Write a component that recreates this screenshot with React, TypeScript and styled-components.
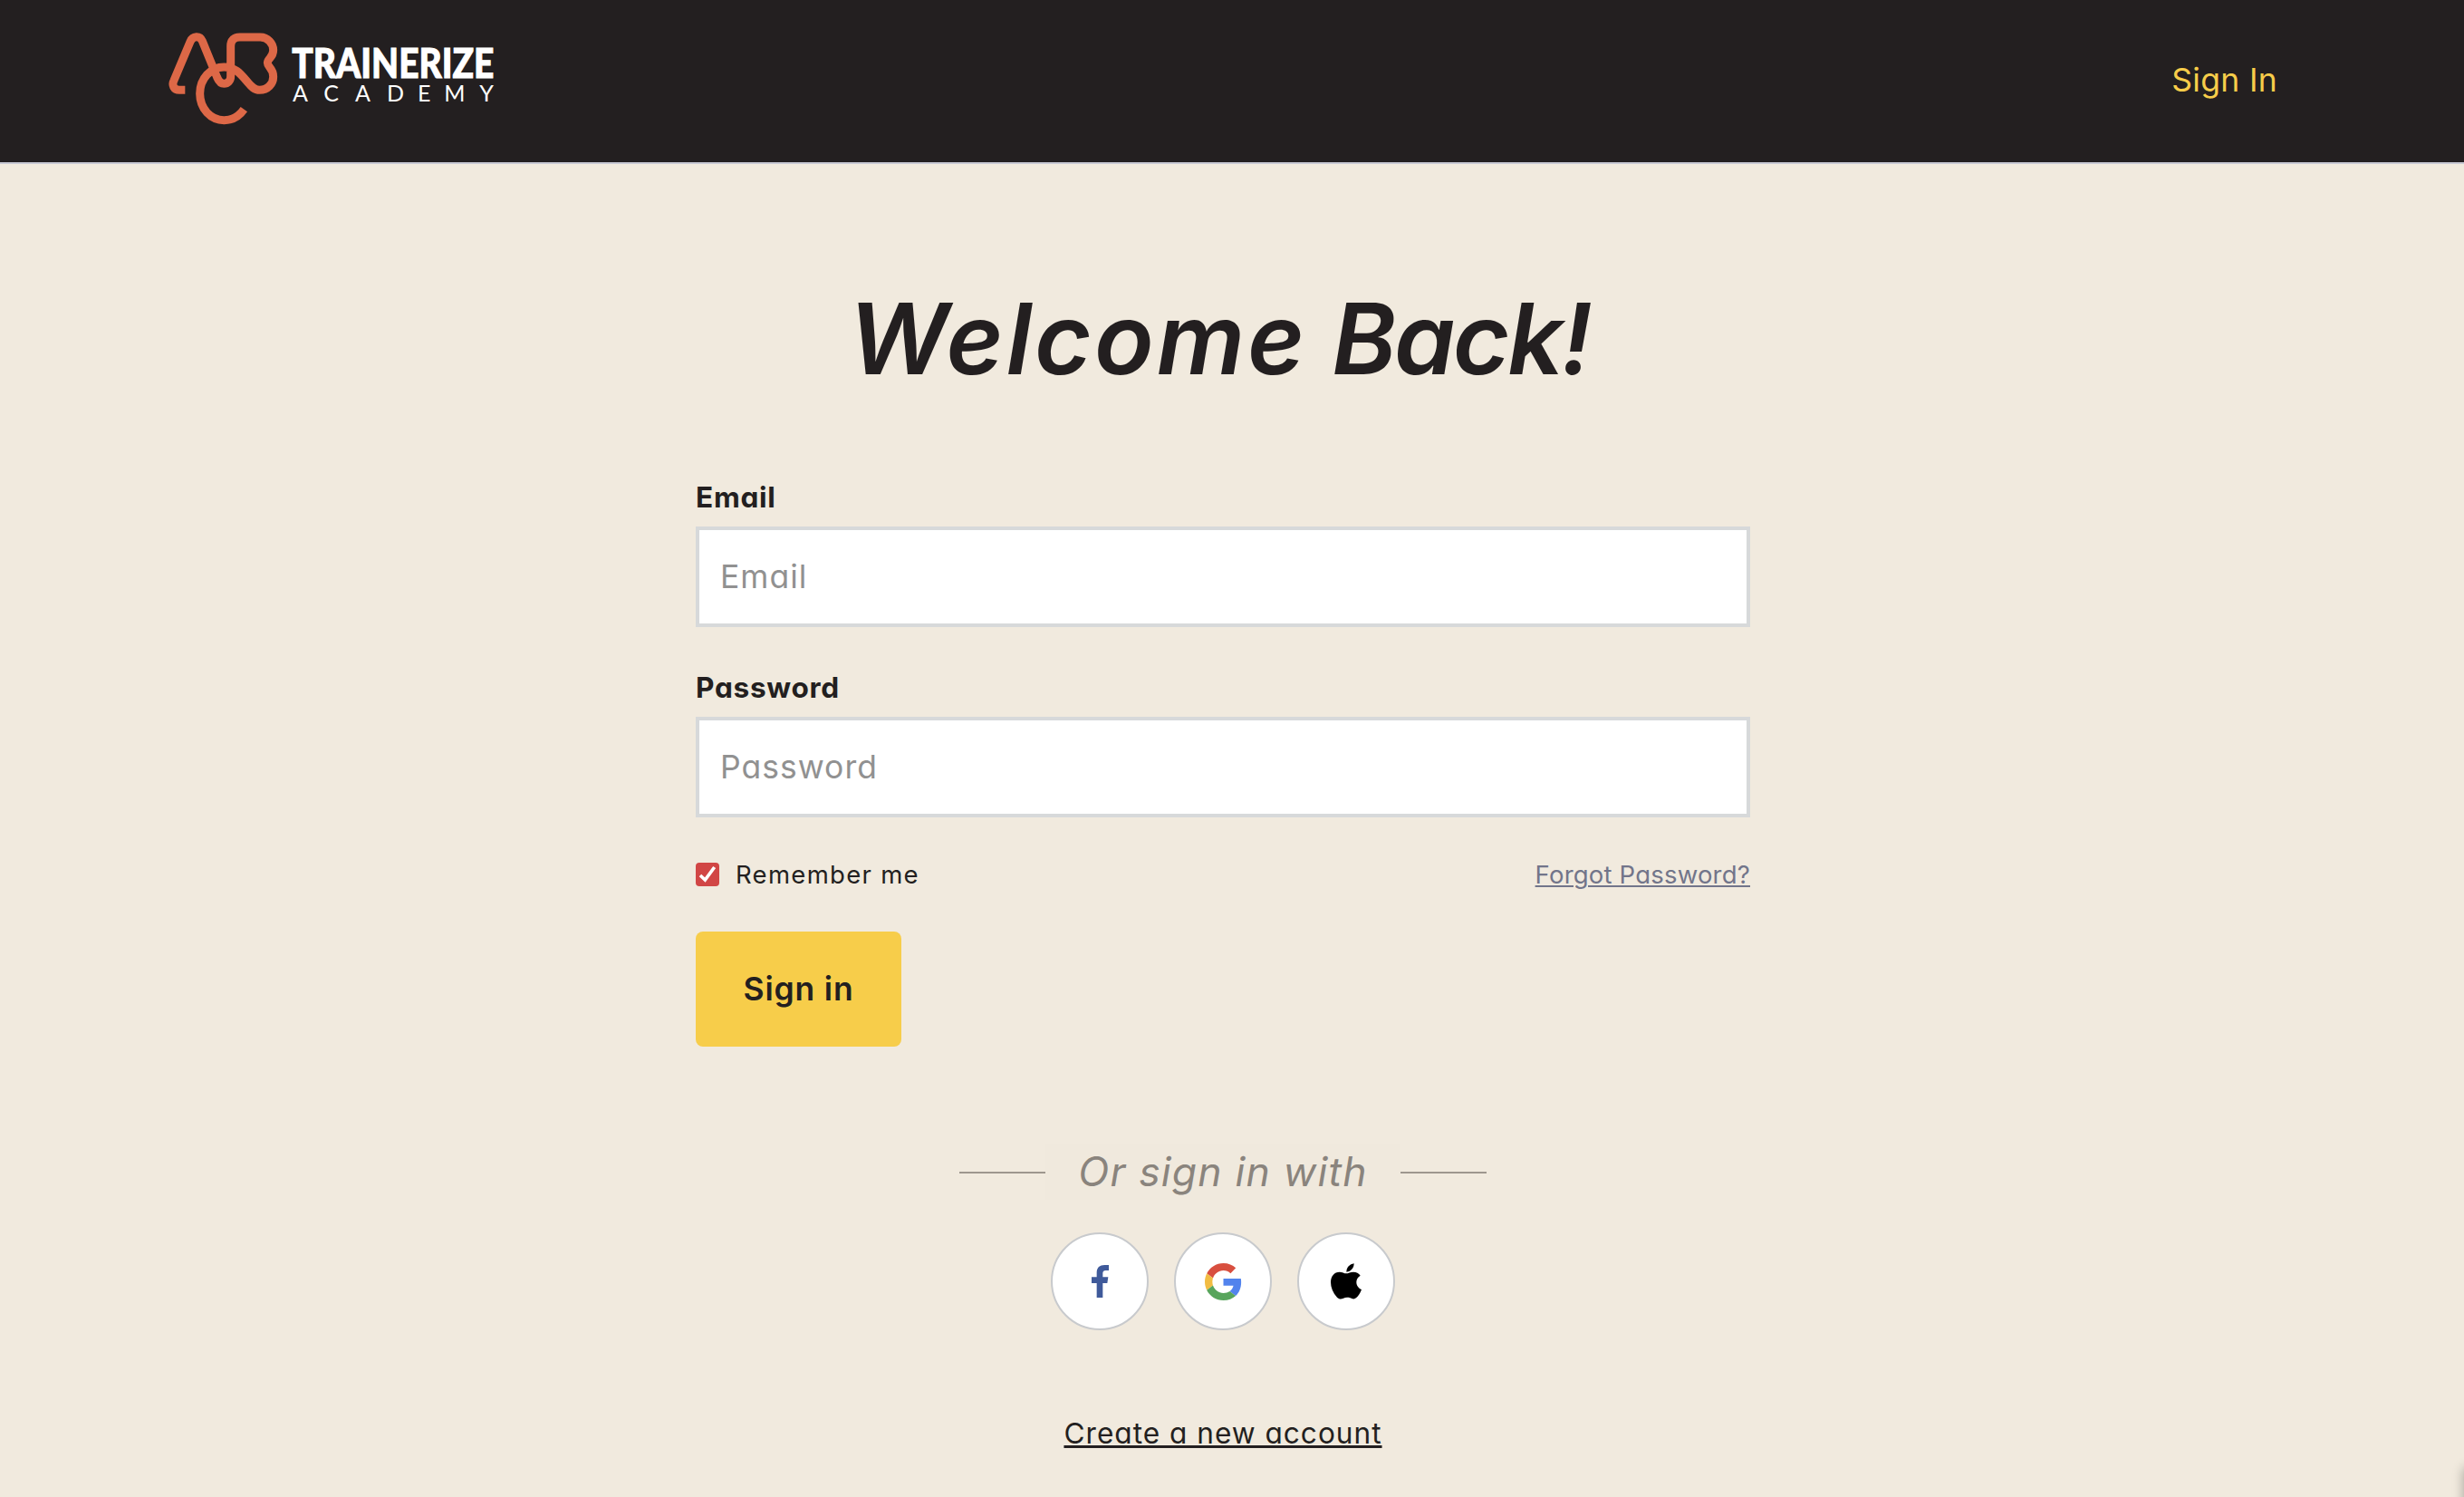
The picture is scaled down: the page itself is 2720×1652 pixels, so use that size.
import { FC } from 'react';
import styled, { createGlobalStyle } from 'styled-components';

const GlobalStyle = createGlobalStyle`
  * {
    box-sizing: border-box;
  }

  body {
    margin: 0;
    background: #f1eade;
    color: #231f20;
    font-family: Inter, "Open Sans", sans-serif;
    font-feature-settings: "cv11";
  }

  input {
    font-feature-settings: inherit;
  }
`;

const Page = styled.div`
  position: relative;
  height: 1652px;
  overflow: hidden;
`;

const Header = styled.header`
  display: flex;
  align-items: flex-start;
  justify-content: space-between;
  height: 181px;
  padding: 35px 206px 0 186px;
  background: #231f20;
  border-bottom: 2px solid #c8c9d4;
`;

const HeaderLink = styled.a`
  margin-top: 29px;
  color: #f7cd4a;
  font-size: 35.5px;
  line-height: 50px;
  letter-spacing: 0.3px;
`;

const Main = styled.main`
  display: flex;
  flex-direction: column;
  align-items: center;
  width: 2700px;
  padding-top: 138px;
`;

const Title = styled.h1`
  margin: 0 0 96px;
  padding-right: 8px;
  font-size: 108px;
  font-style: italic;
  font-weight: 600;
  line-height: 110px;
  white-space: nowrap;
`;

const TitleWord = styled.span<{ $spacing: number }>`
  letter-spacing: ${(p) => p.$spacing}px;
`;

const Form = styled.form`
  display: flex;
  flex-direction: column;
  align-items: flex-start;
  width: 1164px;
`;

const Field = styled.label`
  display: flex;
  flex-direction: column;
  gap: 8px;
  width: 100%;
  margin-bottom: 43px;
`;

const FieldName = styled.span`
  font-size: 31.6px;
  font-weight: 700;
  line-height: 48px;
  letter-spacing: 0.7px;
`;

const Input = styled.input`
  width: 100%;
  height: 111px;
  padding: 0 23px;
  border: 4px solid #d7d9da;
  border-radius: 0;
  outline: none;
  background: #fff;
  font-family: inherit;
  font-size: 35.5px;
  letter-spacing: 1px;

  &::placeholder {
    color: #919191;
    opacity: 1;
  }
`;

const Options = styled.div`
  display: flex;
  align-items: center;
  justify-content: space-between;
  width: 100%;
  height: 40px;
  font-size: 27.5px;
  line-height: 40px;
`;

const Remember = styled.label`
  display: flex;
  align-items: center;
  gap: 18px;
  letter-spacing: 1.3px;
`;

const CheckBox = styled.span`
  display: flex;
  width: 26px;
  height: 26px;
  border-radius: 4px;
  background: #d14645;
`;

const ForgotLink = styled.a`
  color: #72758a;
  letter-spacing: 0.2px;
  text-decoration: underline;
  text-decoration-thickness: 2px;
  text-underline-offset: 2px;
`;

const SubmitButton = styled.button`
  width: 227px;
  height: 127px;
  margin-top: 43px;
  padding: 0;
  border: 0;
  border-radius: 8px;
  background: #f7cd4a;
  color: #231f20;
  font-family: inherit;
  font-feature-settings: inherit;
  font-size: 35.5px;
  font-weight: 600;
  letter-spacing: 0.8px;
`;

const Separator = styled.div`
  display: flex;
  align-items: center;
  width: 582px;
  margin-top: 108px;

  &::before,
  &::after {
    content: '';
    flex: 1;
    height: 2px;
    background: #9e978e;
  }
`;

const SeparatorText = styled.span`
  width: 392px;
  background: #f0e9dd;
  color: #8a847d;
  font-size: 44.5px;
  font-style: italic;
  line-height: 61px;
  letter-spacing: 1.2px;
  text-align: center;
  white-space: nowrap;
`;

const Socials = styled.div`
  display: flex;
  gap: 28px;
  margin-top: 36px;
`;

const SocialButton = styled.a`
  display: flex;
  align-items: center;
  justify-content: center;
  width: 108px;
  height: 108px;
  border: 2px solid #c8cacd;
  border-radius: 50%;
  background: #fff;
`;

const CreateLink = styled.a`
  margin-top: 90px;
  font-size: 31.6px;
  line-height: 48px;
  letter-spacing: 1px;
  text-decoration: underline;
  text-decoration-thickness: 3px;
  text-underline-offset: 2px;
`;

// Mostly off screen, only its soft edge shows in the corner
const ChatShadow = styled.div`
  position: absolute;
  left: 2720px;
  top: 1620px;
  width: 60px;
  height: 60px;
  box-shadow: 0 0 12px rgba(0, 0, 0, 0.32);
`;

const LogoSvg = styled.svg`
  overflow: visible;
`;

const Logo: FC = () => (
  <LogoSvg width="360" height="103" viewBox="48 45 1080 309">
    <path
      d="M103 238H84C66 238 58 222 66 206L120 78C128 58 152 57 160 76L209 196C216 212 222 217 232 217C244 217 254 208 254 192V92C254 74 264 63 284 63H352C376 63 395 83 395 106C395 132 376 132 376 148C376 164 395 164 395 194C395 218 376 238 350 238C332 238 322 226 312 214C286 184 270 162 232 162C188 162 152 200 152 250C152 300 188 338 232 338C260 338 282 325 298 302"
      fill="none"
      stroke="#dd6847"
      strokeWidth="27"
    />
    <g fill="#fff" fontFamily="Lato, sans-serif">
      <text
        x="457"
        y="197"
        fontSize="135"
        fontWeight="900"
        stroke="#fff"
        strokeWidth="3"
        textLength="669"
        lengthAdjust="spacingAndGlyphs"
      >
        TRAINERIZE
      </text>
      <text x="459 562 666 771 873 961 1078" y="276" fontSize="75">
        ACADEMY
      </text>
    </g>
  </LogoSvg>
);

const CheckIcon: FC = () => (
  <svg width="26" height="26" viewBox="0 0 78 78">
    <path d="M15 42L31 57L62 15" fill="none" stroke="#fff" strokeWidth="11" />
  </svg>
);

const FacebookIcon: FC = () => (
  <svg width="19" height="36" viewBox="195 168 57 108">
    <path
      fill="#3f5a9a"
      d="M212 276V228H195V208H212V193C212 176 222 168 238 168H252V186H242C234 186 232 190 232 196V208H250L247 228H232V276Z"
    />
  </svg>
);

const GoogleIcon: FC = () => (
  <svg width="41" height="41" viewBox="0 0 48 48">
    <path
      fill="#d84f3f"
      d="M24 9.5c3.54 0 6.71 1.22 9.21 3.6l6.85-6.85C35.9 2.38 30.47 0 24 0 14.62 0 6.51 5.38 2.56 13.22l7.98 6.19C12.43 13.72 17.74 9.5 24 9.5z"
    />
    <path
      fill="#5283ed"
      d="M46.98 24.55c0-1.57-.15-3.09-.38-4.55H24v9.02h12.94c-.58 2.96-2.26 5.48-4.78 7.18l7.73 6c4.51-4.18 7.09-10.36 7.09-17.65z"
    />
    <path
      fill="#f2bc42"
      d="M10.53 28.59c-.48-1.45-.76-2.99-.76-4.59s.27-3.14.76-4.59l-7.98-6.19C.92 16.46 0 20.12 0 24c0 3.88.92 7.54 2.56 10.78l7.97-6.19z"
    />
    <path
      fill="#58a55c"
      d="M24 48c6.48 0 11.93-2.13 15.89-5.81l-7.73-6c-2.15 1.45-4.92 2.3-8.16 2.3-6.26 0-11.57-4.22-13.47-9.91l-7.98 6.19C6.51 42.62 14.62 48 24 48z"
    />
  </svg>
);

const AppleIcon: FC = () => (
  <svg width="34" height="40" viewBox="986 161 102 118">
    <path d="M1038 189C1038 174 1049 163 1063 161C1063 175 1053 188 1038 189Z" />
    <path d="M1037 194C1044 194 1051 189 1061 189C1071 189 1079 193 1084 201C1075 206 1071 214 1071 223C1071 234 1078 243 1088 247C1084 258 1078 268 1070 275C1063 281 1056 277 1050 275C1043 273 1035 273 1028 276C1021 279 1014 280 1007 273C993 258 986 240 986 223C986 203 998 189 1015 189C1024 189 1031 194 1037 194Z" />
  </svg>
);

const App: FC = () => {
  return (
    <>
      <GlobalStyle />
      <Page>
        <Header>
          <Logo />
          <HeaderLink>Sign In</HeaderLink>
        </Header>
        <Main>
          <Title>
            <TitleWord $spacing={3}>Welcome</TitleWord>{' '}
            <TitleWord $spacing={-2.6}>Back!</TitleWord>
          </Title>
          <Form>
            <Field>
              <FieldName>Email</FieldName>
              <Input type="email" placeholder="Email" />
            </Field>
            <Field>
              <FieldName>Password</FieldName>
              <Input type="password" placeholder="Password" />
            </Field>
            <Options>
              <Remember>
                <CheckBox>
                  <CheckIcon />
                </CheckBox>
                Remember me
              </Remember>
              <ForgotLink>Forgot Password?</ForgotLink>
            </Options>
            <SubmitButton type="button">Sign in</SubmitButton>
          </Form>
          <Separator>
            <SeparatorText>Or sign in with</SeparatorText>
          </Separator>
          <Socials>
            <SocialButton>
              <FacebookIcon />
            </SocialButton>
            <SocialButton>
              <GoogleIcon />
            </SocialButton>
            <SocialButton>
              <AppleIcon />
            </SocialButton>
          </Socials>
          <CreateLink>Create a new account</CreateLink>
        </Main>
        <ChatShadow />
      </Page>
    </>
  );
};

export default App;
